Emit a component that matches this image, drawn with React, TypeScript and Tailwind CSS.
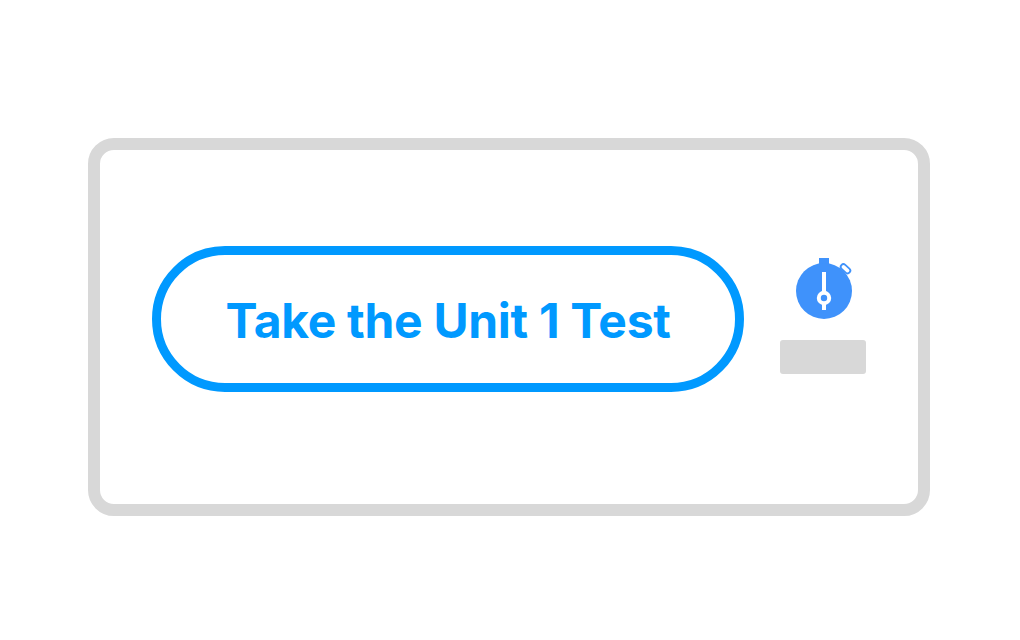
export default function App() {
  return (
    <div className="w-[1020px] h-[640px] bg-white pt-[138px] pl-[88px] font-['Inter',sans-serif]">
      <div className="w-[842px] h-[378px] border-[12px] border-[#d8d8d8] rounded-[26px] flex items-start pl-[52px] pt-[96px]">
        <button className="w-[592px] h-[146px] border-[9px] border-[#0099ff] rounded-full flex items-center justify-center pt-[3px] text-[#0099ff] text-[48px] font-bold tracking-[-0.3px] leading-none">
          Take the Unit 1 Test
        </button>
        <div className="ml-[36px] mt-[12px] w-[86px] flex flex-col items-center">
          <svg width="60" height="62" viewBox="0 0 60 62" className="block">
            <rect x="26" y="0" width="10" height="8" fill="#3f92fb" />
            <rect x="47" y="8" width="11" height="5.5" rx="2.75" fill="#fff" stroke="#3f92fb" strokeWidth="1.8" transform="rotate(42 52.5 10.75)" />
            <circle cx="31" cy="33" r="28" fill="#3f92fb" />
            <rect x="29" y="14" width="4" height="38" fill="#fff" />
            <circle cx="31" cy="40" r="5.2" fill="#3f92fb" stroke="#fff" strokeWidth="4" />
          </svg>
          <div className="mt-[20px] w-[86px] h-[34px] rounded-[3px] bg-[#d8d8d8]" />
        </div>
      </div>
    </div>
  );
}
